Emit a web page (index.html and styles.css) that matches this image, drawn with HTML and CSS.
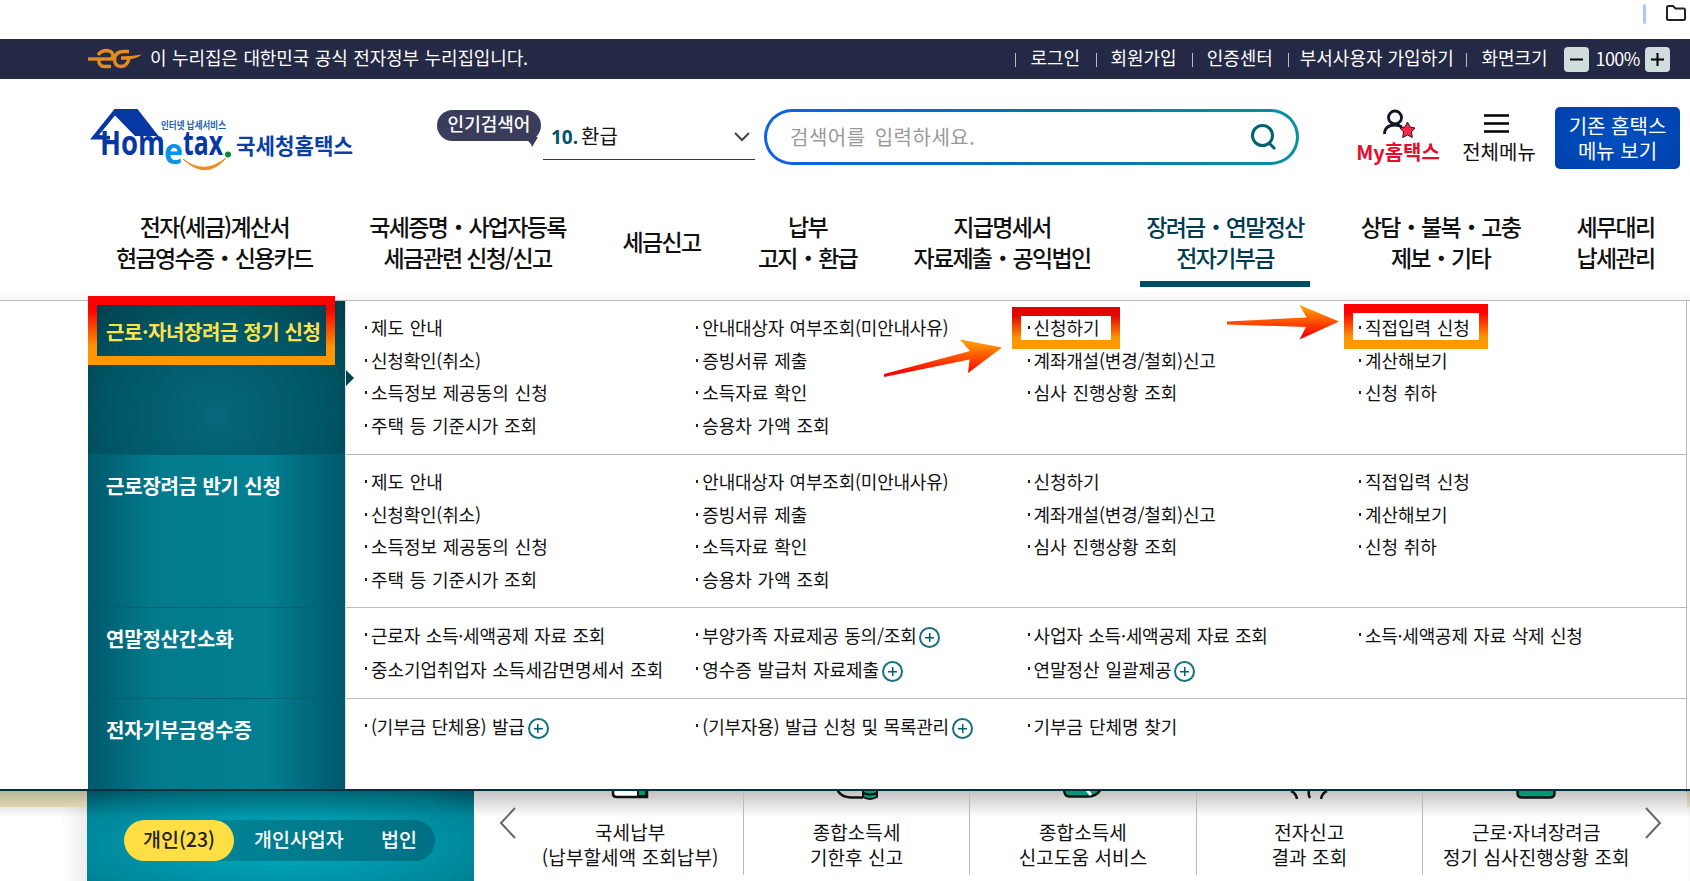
FILE: index.html
```html
<!DOCTYPE html>
<html lang="ko">

<head>
    <meta charset="UTF-8">
    <meta name="viewport" content="width=device-width, initial-scale=1.0">
    <title>국세청 홈택스</title>
    <link rel="stylesheet" href="styles.css">
</head>

<body>
    <div id="page">
        <div class="browser-bar">
            <span class="bar-line"></span>
            <svg width="22" height="18" viewBox="0 0 22 18">
                <path d="M2 3.5Q2 2 3.500 2H8l2.500 2.500H18.500Q20 4.500 20 6V14.500Q20 16 18.500 16H3.500Q2 16 2 14.500Z" fill="none" stroke="#222" stroke-width="2" />
            </svg>
        </div>

        <div class="gov-bar">
            <svg class="eg" width="56" height="22" viewBox="0 0 56 22">
                <g fill="none" stroke="#e58a1f" stroke-width="3.400">
                    <path d="M1 11H26" />
                    <path d="M11 7Q14 2.500 20 2.500Q26 3 26 8.500L24 11M12 11Q11 18.500 18 18.500H24" />
                    <path d="M42 3.500H36Q28 4 27.500 11Q27.500 18.500 34 18.500Q41 18 42 10H34" />
                </g>
                <path d="M38 8.800L55 6.500Q49 11 41 11.500Z" fill="#e58a1f" />
            </svg>
            <span class="gov-text">이 누리집은 대한민국 공식 전자정부 누리집입니다.</span>
            <div class="utils">
                <span>로그인</span>
                <span>회원가입</span>
                <span>인증센터</span>
                <span>부서사용자 가입하기</span>
                <span>화면크기</span>
            </div>
            <div class="zoom-con">
                <div class="zoom-btn"><svg width="15" height="15"><path d="M1 7.500H14" stroke="#000" stroke-width="2" /></svg></div>
                <span>100%</span>
                <div class="zoom-btn"><svg width="15" height="15"><path d="M1 7.500H14M7.500 1V14" stroke="#000" stroke-width="2" /></svg></div>
            </div>
        </div>

        <header>
            <svg class="logo" width="268" height="66" viewBox="88 106 268 66">
                <path d="M90 139.500L114.500 109H137.500L158.500 136H135L115 115.500L99 135L110 136V139.500Z" fill="#0637a3" />
                <text x="161" y="128.500" font-size="10" textLength="65" lengthAdjust="spacingAndGlyphs" fill="#1d5fae">인터넷 납세서비스</text>
                <text x="100" y="155" class="lat" font-size="34" textLength="65" lengthAdjust="spacingAndGlyphs" fill="#0637a3">Hom</text>
                <text x="164" y="163.500" class="lat" font-size="36" textLength="19" lengthAdjust="spacingAndGlyphs" fill="#0a93e8">e</text>
                <text x="183" y="155" class="lat" font-size="34" textLength="40" lengthAdjust="spacingAndGlyphs" fill="#0637a3">tax</text>
                <circle cx="228" cy="154.500" r="3" fill="#0b8a2c" />
                <path d="M183 159Q204 176 226 158Q206 181 183 159Z" fill="#f58a1a" stroke="#f58a1a" stroke-width="1" />
                <text x="236" y="154" font-size="22" textLength="117" lengthAdjust="spacingAndGlyphs" fill="#0a3fa6">국세청홈택스</text>
            </svg>
            <div class="popular">인기검색어
                <svg class="tail" width="16" height="11"><path d="M0 0H15L9 10Q8 4 0 2Z" fill="#393c5a" /></svg>
            </div>
            <div class="keyword">
                <b>10.</b><span>환급</span>
                <svg width="18" height="12"><path d="M2 2L9 9L16 2" fill="none" stroke="#444" stroke-width="2" /></svg>
            </div>
            <div class="search">
                <span>검색어를 입력하세요.</span>
                <svg width="28" height="28"><circle cx="12.500" cy="12.500" r="10" fill="none" stroke="#006175" stroke-width="3" /><path d="M19 20L25 26" stroke="#006175" stroke-width="3" /></svg>
            </div>
            <div class="quick my">
                <svg width="36" height="30" viewBox="0 0 36 30">
                    <circle cx="15" cy="8.500" r="6.500" fill="none" stroke="#111527" stroke-width="2.800" />
                    <path d="M4.500 25Q4.500 16 15 16Q19 16 22 18" fill="none" stroke="#111527" stroke-width="2.800" />
                    <path d="M27.500 13L30 18L35 19L31.500 22.800L32.300 28.500L27.500 26L22.700 28.500L23.500 22.800L20 19L25 18Z" fill="#f62747" stroke="#3a0c1c" stroke-width="1" />
                </svg>
                <span>My홈택스</span>
            </div>
            <div class="quick all">
                <svg width="30" height="30"><path d="M0 6.500H25M0 14.500H25M0 22.500H25" stroke="#000" stroke-width="2.600" /></svg>
                <span>전체메뉴</span>
            </div>
            <div class="old-btn">기존 홈택스<br>메뉴 보기</div>
        </header>

        <nav>
            <div>전자(세금)계산서<br>현금영수증・신용카드</div>
            <div>국세증명・사업자등록<br>세금관련 신청/신고</div>
            <div>세금신고</div>
            <div>납부<br>고지・환급</div>
            <div>지급명세서<br>자료제출・공익법인</div>
            <div class="on">장려금・연말정산<br>전자기부금</div>
            <div>상담・불복・고충<br>제보・기타</div>
            <div>세무대리<br>납세관리</div>
        </nav>

        <div class="menu">
            <div class="side">
                <div class="side-item on">근로·자녀장려금 정기 신청</div>
                <div class="side-item">근로장려금 반기 신청</div>
                <div class="side-item">연말정산간소화</div>
                <div class="side-item">전자기부금영수증</div>
            </div>
            <div class="rows">
                <div class="row">
                    <ul>
                        <li>제도 안내</li>
                        <li class="tight">신청확인(취소)</li>
                        <li>소득정보 제공동의 신청</li>
                        <li>주택 등 기준시가 조회</li>
                    </ul>
                    <ul>
                        <li class="tight">안내대상자 여부조회(미안내사유)</li>
                        <li>증빙서류 제출</li>
                        <li>소득자료 확인</li>
                        <li>승용차 가액 조회</li>
                    </ul>
                    <ul>
                        <li>신청하기</li>
                        <li class="tight">계좌개설(변경/철회)신고</li>
                        <li>심사 진행상황 조회</li>
                    </ul>
                    <ul>
                        <li>직접입력 신청</li>
                        <li>계산해보기</li>
                        <li>신청 취하</li>
                    </ul>
                </div>
                <div class="row">
                    <ul>
                        <li>제도 안내</li>
                        <li class="tight">신청확인(취소)</li>
                        <li>소득정보 제공동의 신청</li>
                        <li>주택 등 기준시가 조회</li>
                    </ul>
                    <ul>
                        <li class="tight">안내대상자 여부조회(미안내사유)</li>
                        <li>증빙서류 제출</li>
                        <li>소득자료 확인</li>
                        <li>승용차 가액 조회</li>
                    </ul>
                    <ul>
                        <li>신청하기</li>
                        <li class="tight">계좌개설(변경/철회)신고</li>
                        <li>심사 진행상황 조회</li>
                    </ul>
                    <ul>
                        <li>직접입력 신청</li>
                        <li>계산해보기</li>
                        <li>신청 취하</li>
                    </ul>
                </div>
                <div class="row wide">
                    <ul>
                        <li class="tight">근로자 소득·세액공제 자료 조회</li>
                        <li>중소기업취업자 소득세감면명세서 조회</li>
                    </ul>
                    <ul>
                        <li class="tight">부양가족 자료제공 동의/조회<i class="plus"></i></li>
                        <li>영수증 발급처 자료제출<i class="plus"></i></li>
                    </ul>
                    <ul>
                        <li class="tight">사업자 소득·세액공제 자료 조회</li>
                        <li>연말정산 일괄제공<i class="plus"></i></li>
                    </ul>
                    <ul>
                        <li class="tight">소득·세액공제 자료 삭제 신청</li>
                    </ul>
                </div>
                <div class="row wide">
                    <ul>
                        <li class="tight">(기부금 단체용) 발급<i class="plus"></i></li>
                    </ul>
                    <ul>
                        <li class="tight">(기부자용) 발급 신청 및 목록관리<i class="plus"></i></li>
                    </ul>
                    <ul>
                        <li>기부금 단체명 찾기</li>
                    </ul>
                    <ul></ul>
                </div>
            </div>
        </div>

        <div class="bottom">
            <div class="edge left"></div>
            <div class="login-box">
                <div class="tabs">
                    <span class="on">개인(23)</span>
                    <span>개인사업자</span>
                    <span>법인</span>
                </div>
            </div>
            <div class="cards">
                <svg class="prev" width="20" height="34"><path d="M17 2L3 17L17 32" fill="none" stroke="#666" stroke-width="2" /></svg>
                <div class="card">
                    <svg width="40" height="10"><path d="M3 -4V3Q3 6 7 6H37V-4" fill="#fff" stroke="#111" stroke-width="2.500" /><path d="M28 -2H36V5H28Z" fill="#009973" stroke="#111" stroke-width="2" /></svg>
                    국세납부<br>(납부할세액 조회납부)
                </div>
                <div class="card">
                    <svg width="44" height="10"><path d="M2 -2Q5 6 16 6.500H28" fill="none" stroke="#111" stroke-width="2.500" /><path d="M28 -3V6Q35 10 42 6V-3Z" fill="#009973" stroke="#111" stroke-width="2" /><path d="M28 2Q35 5 42 2" fill="none" stroke="#111" stroke-width="2" /></svg>
                    종합소득세<br>기한후 신고
                </div>
                <div class="card">
                    <svg width="40" height="10"><path d="M1 -3Q1 5.500 6 5.500H26Q34 5 38 -2" fill="#009973" stroke="#111" stroke-width="2.500" /><path d="M24 -1L28 4" stroke="#fff" stroke-width="3" /></svg>
                    종합소득세<br>신고도움 서비스
                </div>
                <div class="card">
                    <svg width="40" height="10"><path d="M2 0Q7 2 8 8M20 -1Q19 4 21 7M38 0Q33 2 32 8" fill="none" stroke="#111" stroke-width="2.500" /></svg>
                    전자신고<br>결과 조회
                </div>
                <div class="card">
                    <svg width="40" height="10"><path d="M1.500 -4V2Q1.500 6.500 6 6.500H34Q38.500 6.500 38.500 2V-4Z" fill="#009973" stroke="#111" stroke-width="2.500" /></svg>
                    근로·자녀장려금<br>정기 심사진행상황 조회
                </div>
                <svg class="next" width="20" height="34"><path d="M3 2L17 17L3 32" fill="none" stroke="#666" stroke-width="2" /></svg>
            </div>
            <div class="edge right"></div>
        </div>

        <!-- highlight boxes and arrows over the menu -->
        <svg class="marks" width="1690" height="881" viewBox="0 0 1690 881">
            <defs>
                <linearGradient id="box" x1="0" y1="0" x2="0" y2="1">
                    <stop offset=".2" stop-color="#f00" />
                    <stop offset=".75" stop-color="#ff9800" />
                </linearGradient>
                <linearGradient id="box2" x1="0" y1="0" x2="0" y2="1">
                    <stop offset=".2" stop-color="#e10600" />
                    <stop offset=".75" stop-color="#ff9800" />
                </linearGradient>
                <linearGradient id="up" x1="0" y1="0" x2="0" y2="1">
                    <stop offset=".1" stop-color="#ff9800" />
                    <stop offset=".9" stop-color="#f00" />
                </linearGradient>
            </defs>
            <path fill="url(#box)" fill-rule="evenodd" d="M88 296H335V365H88ZM97 305V356H326V305Z" />
            <path fill="url(#box2)" fill-rule="evenodd" d="M1012 307H1120V349H1012ZM1021 316V340H1111V316Z" />
            <path fill="url(#box)" fill-rule="evenodd" d="M1344 304H1488V349H1344ZM1353 313V340H1479V313Z" />
            <path fill="url(#up)" d="M884 374L970 351L960 339.500L1002 347.500L968 373L969.500 359.500L884 377Z" />
            <path fill="url(#up)" d="M1227 321.500L1306.500 317.500L1299.500 305L1339 321.500L1299.500 339.500L1306 327L1227 324.500Z" />
        </svg>
    </div>
</body>

</html>
```
FILE: styles.css
```css
* {
    box-sizing: border-box;
}

body {
    margin: 0;
    font-family: "Noto Sans CJK KR", sans-serif;
    font-size: 18px;
    color: #111;
    background-color: #fff;
}

svg {
    display: block;
    flex: none;
}

#page {
    position: relative;
    width: 1690px;
    height: 881px;
    overflow: hidden;
    white-space: nowrap;
}

.browser-bar {
    height: 39px;
    display: flex;
    justify-content: flex-end;
    align-items: flex-start;
    gap: 19px;
    padding: 4px 3px 0 0;
}

.bar-line {
    width: 3px;
    height: 20px;
    border-radius: 2px;
    background-color: #a8c7fa;
}

.gov-bar {
    height: 40px;
    display: flex;
    align-items: center;
    padding-left: 87px;
    background-color: #242946;
    color: #fff;
    line-height: 36px;
}

.gov-text {
    margin-left: 7px;
    width: 865px;
    margin-top: -5px;
    letter-spacing: -.15px;
    word-spacing: .8px;
}

.utils {
    display: grid;
    grid-template-columns: 80.5px 96px 96.5px 177.5px 98px;
    text-align: center;
    line-height: 34px;
    margin-top: -5px;
}

.utils span {
    background: linear-gradient(#b8bac6, #b8bac6) 0 13px / 1px 14px no-repeat;
}

.zoom-con {
    display: flex;
    align-items: center;
    gap: 7px;
}

.zoom-con span {
    width: 42px;
    margin-top: -3px;
    letter-spacing: -.6px;
}

.zoom-btn {
    width: 25px;
    height: 25px;
    border-radius: 4px;
    background-color: #d0dcde;
    display: flex;
    align-items: center;
    justify-content: center;
}

header {
    height: 121px;
    display: flex;
    align-items: flex-start;
    padding-left: 88px;
}

.logo {
    margin-top: 27px;
    font-weight: bold;
}

.lat {
    font-family: "Open Sans", sans-serif;
    font-weight: bold;
}

.popular {
    position: relative;
    width: 104px;
    height: 31px;
    margin: 31px 2px 0 81px;
    border-radius: 16px;
    background-color: #393c5a;
    color: #fff;
    font-weight: 500;
    font-size: 18px;
    line-height: 27px;
    text-align: center;
}

.tail {
    position: absolute;
    right: 2px;
    top: 27px;
}

.keyword {
    width: 212px;
    height: 51px;
    margin-top: 30px;
    padding: 5px 4px 0 8px;
    display: flex;
    align-items: center;
    border-bottom: 1px solid #004d57;
    font-size: 20px;
}

.keyword b {
    color: #005468;
    font-family: "Noto Sans", sans-serif;
    width: 30px;
    font-size: 19px;
}

.keyword span {
    margin-top: -2px;
}

.keyword svg {
    margin-left: auto;
}

.search {
    width: 535px;
    height: 56px;
    margin: 30px 0 0 9px;
    padding: 0 18px 0 23px;
    display: flex;
    justify-content: space-between;
    align-items: center;
    border: 3px solid transparent;
    border-radius: 28px;
    background: linear-gradient(#fff, #fff) padding-box, linear-gradient(90deg, #0f62e6, #0b70b0 50%, #0890a4) border-box;
    color: #999;
    font-size: 20px;
    letter-spacing: .5px;
    word-spacing: 3px;
}

.search span {
    margin-top: -2px;
}

.quick {
    display: flex;
    flex-direction: column;
    align-items: center;
    margin-top: 30px;
    font-size: 20px;
    line-height: 28px;
}

.quick span {
    margin-top: -1px;
}

.my {
    width: 88px;
    margin-left: 55px;
}

.my span {
    color: #e80c2c;
    font-weight: bold;
}

.all {
    width: 76px;
    margin-left: 19px;
}

.old-btn {
    width: 125px;
    height: 62px;
    margin: 28px 0 0 18px;
    padding-top: 6px;
    border-radius: 5px;
    background: radial-gradient(#0050c0, #0040ac);
    color: #fff;
    font-size: 20px;
    line-height: 25px;
    text-align: center;
}

nav {
    height: 101px;
    padding: 10px 0 0 88px;
    display: grid;
    grid-template-columns: 252.6px 253.8px 134.2px 157.8px 231.2px 216.8px 212.2px 137.8px;
    border-bottom: 1px solid #bbb;
    background: linear-gradient(#fff 90%, #f6f6f6);
    font-size: 23px;
    font-weight: 500;
    letter-spacing: -1.7px;
    line-height: 31px;
    text-align: center;
}

nav div {
    height: 77px;
    padding-bottom: 14px;
    display: grid;
    place-content: center;
}

nav .on {
    width: 170px;
    margin-left: -2px;
    justify-self: center;
    border-bottom: 6px solid #004e63;
    padding-bottom: 8px;
    color: #003c50;
}

.menu {
    height: 491px;
    margin-right: 3px;
    padding-left: 88px;
    display: flex;
    border-right: 1px solid #bbb;
}

.side,
.rows {
    display: grid;
    grid-template-rows: 154px 153px 91px 91px;
}

.side {
    position: relative;
    width: 257px;
    background: linear-gradient(90deg, #00586b, #027a8b 25%, #027f91 70%, #00586b);
}

.side::after {
    content: "";
    position: absolute;
    left: 258px;
    top: 69px;
    border: 8px solid transparent;
    border-left-color: #00414e;
    border-right: 0;
}

.side-item {
    padding: 15px 0 0 18px;
    border-bottom: 1px solid #006070;
    color: #fff;
    font-size: 20px;
    font-weight: bold;
    line-height: 32px;
    letter-spacing: -.2px;
}

.side-item:last-child {
    border: 0;
}

.side-item.on {
    color: #ffe14d;
    letter-spacing: -.4px;
    background: radial-gradient(ellipse 190px 170px at 50% 75%, #05687a, #005564 60%, #003945);
}

.rows {
    flex: 1;
    border-left: 1px solid #ddd;
}

.row {
    display: grid;
    grid-template-columns: 331.3px 331.3px 331.3px 1fr;
    padding: 10px 0 0 19px;
    border-bottom: 1px solid #bbb;
    line-height: 32.6px;
}

.row:last-child {
    border: 0;
}

.wide {
    line-height: 34px;
}

ul {
    margin: 0;
    padding: 0;
    list-style: none;
}

li {
    display: flex;
    letter-spacing: -.05px;
    word-spacing: .8px;
}

li::before {
    content: "";
    width: 2px;
    height: 3px;
    margin: 15px 4px 0 0;
    background-color: #222;
}

.tight {
    letter-spacing: -.22px;
}

.plus {
    width: 21px;
    height: 21px;
    margin: 9px 0 0 3px;
    border: 2px solid #17717f;
    border-radius: 50%;
    background: linear-gradient(#005f70, #005f70) center / 9px 1.5px no-repeat, linear-gradient(#005f70, #005f70) center / 1.5px 9px no-repeat;
}

.bottom {
    position: relative;
    height: 92px;
    display: flex;
    border-top: 2px solid #00313f;
    margin-top: -3px;
}

.bottom::before {
    content: "";
    position: absolute;
    left: 0;
    right: 0;
    top: 0;
    height: 26px;
    background: linear-gradient(rgba(0, 0, 0, .24), transparent);
}

.edge {
    background: linear-gradient(#f4edc6 16px, transparent 16px), linear-gradient(90deg, #fff 70%, #eee);
}

.left {
    width: 87px;
}

.right {
    flex: 1;
}

.login-box {
    width: 387px;
    padding: 29px 0 0 37px;
    background: radial-gradient(ellipse at 50% 60%, #00a2b6 20%, #008497 80%, #00697c);
}

.tabs {
    position: relative;
    width: 311px;
    height: 41px;
    display: flex;
    border-radius: 21px;
    background: linear-gradient(90deg, #008c9e, #007083);
    color: #fff;
    font-size: 19.5px;
    font-weight: 500;
    line-height: 37px;
}

.tabs span {
    flex: none;
    margin-left: 20px;
    width: 107px;
}

.tabs .on {
    width: 110px;
    margin: 0;
    border-radius: 21px;
    background-color: #ffdf43;
    color: #222;
    text-align: center;
}

.cards {
    position: relative;
    width: 1213px;
    height: 84px;
    padding-left: 43.500px;
    display: flex;
    font-size: 19px;
    letter-spacing: .1px;
    line-height: 25px;
    text-align: center;
}

.card {
    width: 226.4px;
    border-right: 1px solid #bbb;
}

.card:nth-last-child(2) {
    border: 0;
}

.card svg {
    margin: 0 auto 18px;
}

.prev,
.next {
    position: absolute;
    top: 15px;
    left: 24px;
}

.next {
    left: 1169px;
}

.marks {
    position: absolute;
    left: 0;
    top: 0;
}
```
